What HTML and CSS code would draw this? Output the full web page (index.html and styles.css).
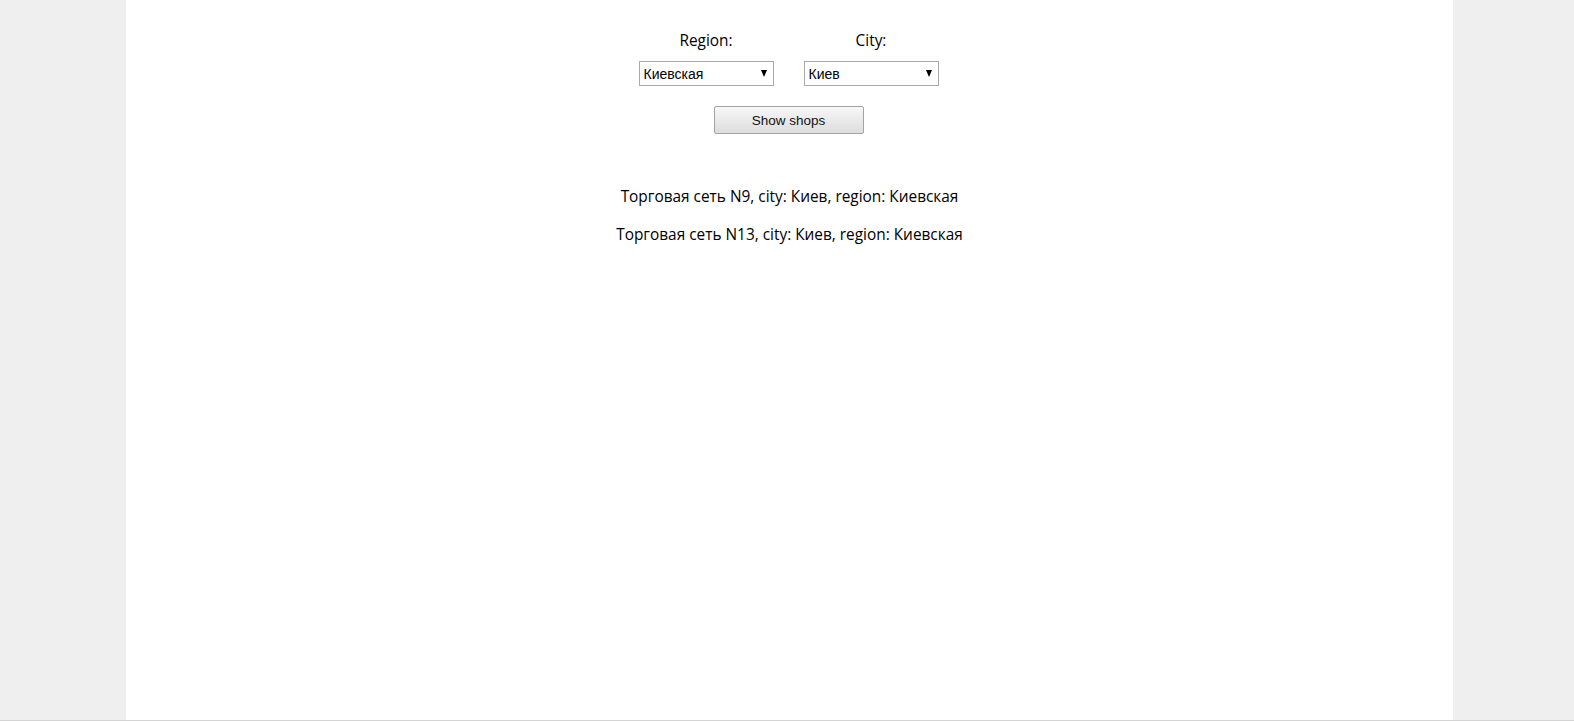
FILE: index.html
```html
<!DOCTYPE html>
<html>
<head>
<meta charset="utf-8">
<link rel="stylesheet" href="styles.css">
</head>
<body>
<div class="page">
  <div class="column">
    <form class="filters">
      <div class="fields">
        <div class="field">
          <label class="field-label">Region:</label>
          <div class="select-wrap">
            <select class="select"><option>Киевская</option></select>
          </div>
        </div>
        <div class="field">
          <label class="field-label">City:</label>
          <div class="select-wrap">
            <select class="select"><option>Киев</option></select>
          </div>
        </div>
      </div>
      <button type="button" class="btn">Show shops</button>
    </form>
    <div class="results">
      <p class="shop">Торговая сеть N9, city: Киев, region: Киевская</p>
      <p class="shop">Торговая сеть N13, city: Киев, region: Киевская</p>
    </div>
  </div>
</div>
</body>
</html>
```
FILE: styles.css
```css
html, body {
  margin: 0;
  padding: 0;
  background: #efefef;
}
.page {
  height: 720px;
  border-bottom: 1px solid #d4d4d4;
  overflow: hidden;
}
.column {
  margin-left: 126px;
  width: 1327px;
  height: 100%;
  background: #ffffff;
  font-family: "Open Sans", sans-serif;
  font-size: 15.4px;
  color: #000;
}
.filters {
  display: flex;
  flex-direction: column;
  align-items: center;
  padding-top: 30px;
}
.fields {
  display: flex;
  gap: 30px;
  margin-right: 2px;
}
.field {
  display: flex;
  flex-direction: column;
  align-items: center;
  width: 135px;
}
.field-label {
  line-height: 22px;
  height: 22px;
  margin-bottom: 9px;
}
.select-wrap {
  position: relative;
  width: 135px;
  height: 25px;
}
.select {
  -webkit-appearance: none;
  appearance: none;
  width: 135px;
  height: 25px;
  margin: 0;
  padding: 0 18px 0 4px;
  border: 1px solid #a9a9a9;
  border-radius: 0;
  background: #fff;
  font-family: "Liberation Sans", Arial, sans-serif;
  font-size: 14px;
  color: #000;
  box-sizing: border-box;
}
.select-wrap::after {
  content: "";
  position: absolute;
  right: 7px;
  top: 9px;
  width: 0;
  height: 0;
  border-left: 3.5px solid transparent;
  border-right: 3.5px solid transparent;
  border-top: 7px solid #000;
  pointer-events: none;
}
.btn {
  margin-top: 20px;
  margin-right: 2px;
  width: 150px;
  height: 28px;
  padding: 0;
  border: 1px solid #a3a3a3;
  border-radius: 2px;
  background: linear-gradient(#f7f7f7, #dddddd);
  font-family: "Liberation Sans", Arial, sans-serif;
  font-size: 13.5px;
  color: #111;
}
.results {
  padding-top: 36px;
  text-align: center;
}
.shop {
  margin: 16px 0;
  line-height: 22px;
}
```
